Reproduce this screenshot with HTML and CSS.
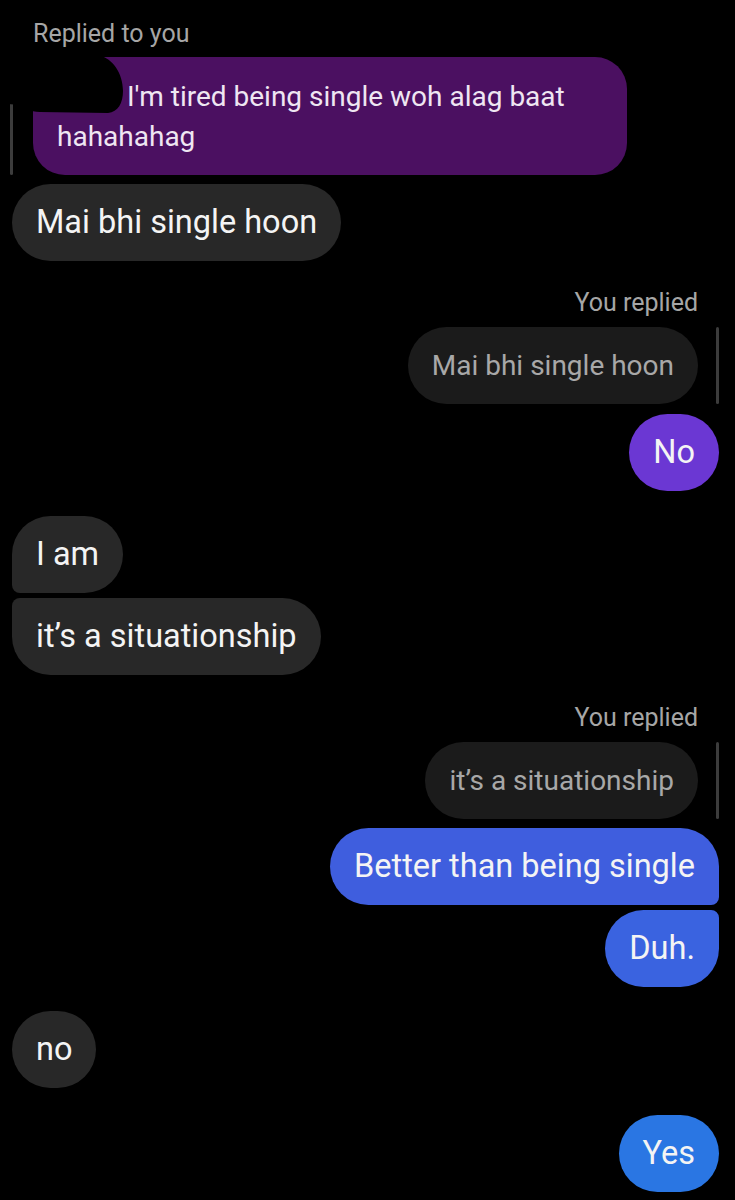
FILE: index.html
```html
<!DOCTYPE html>
<html lang="en">
<head>
  <meta charset="UTF-8" />
  <meta name="viewport" content="width=device-width, initial-scale=1.0" />
  <title>Chat</title>
  <link rel="stylesheet" href="styles.css">
</head>
<body>
<div class="chat">

  <div class="label label-left">Replied to you</div>
  <div class="quote quote-left">
    <div class="quote-bar"></div>
    <div class="bubble purple"><span class="spacer"></span>I'm tired being single woh alag baat hahahahag</div>
    <svg class="redacted" viewBox="0 0 118 62" width="118" height="62">
      <path d="M0 1 H92 C104 3 115 18 115 36 C115 48 110 57 100 58 L32 57 C22 57 16 52 12 50 L0 49 Z" fill="#000"/>
    </svg>
  </div>
  <div class="bubble in mt-9">Mai bhi single hoon</div>

  <div class="label label-right mt-29">You replied</div>
  <div class="quote quote-right">
    <div class="bubble faded">Mai bhi single hoon</div>
    <div class="quote-bar"></div>
  </div>
  <div class="bubble out violet mt-10">No</div>

  <div class="bubble in first mt-25">I am</div>
  <div class="bubble in last mt-5">it’s a situationship</div>

  <div class="label label-right mt-30">You replied</div>
  <div class="quote quote-right">
    <div class="bubble faded">it’s a situationship</div>
    <div class="quote-bar"></div>
  </div>
  <div class="bubble out blue first mt-9">Better than being single</div>
  <div class="bubble out blue2 last mt-5">Duh.</div>

  <div class="bubble in mt-24">no</div>

  <div class="bubble out sky mt-27">Yes</div>

</div>
</body>
</html>
```

FILE: styles.css
```css
body {
  margin: 0;
  background: #000;
  font-family: Roboto, "Noto Sans", sans-serif;
  color: #f2f2f2;
}
.chat {
  display: flex;
  flex-direction: column;
  align-items: flex-start;
  padding: 21px 16px 0 12px;
}
.label {
  font-size: 25px;
  line-height: 26px;
  color: #a6a6a6;
}
.label-left {
  margin-left: 21px;
}
.label-right {
  align-self: flex-end;
  margin-right: 21px;
}
.bubble {
  font-size: 32.5px;
  line-height: 37px;
  padding: 20px 24px;
  border-radius: 39px;
  background: #282828;
  color: #f4f4f4;
  white-space: nowrap;
}
.in.first { border-bottom-left-radius: 8px; }
.in.last { border-top-left-radius: 8px; }
.out { align-self: flex-end; }
.out.first { border-bottom-right-radius: 8px; }
.out.last { border-top-right-radius: 8px; }

.violet { background: #6b37d3; }
.blue { background: #3f5ede; }
.blue2 { background: #3a63e0; }
.sky { background: #2a76e3; }

.quote {
  display: flex;
  align-items: stretch;
  margin-top: 10px;
  position: relative;
}
.quote-left {
  margin-left: -2px;
  gap: 20px;
}
.quote-right {
  align-self: flex-end;
  gap: 18px;
  margin-top: 11px;
}
.quote-bar {
  width: 3px;
  background: #3c3c3c;
  border-radius: 2px;
}
.faded {
  background: #1b1b1b;
  color: #a8a8a8;
  font-size: 28px;
}
.purple {
  background: #4b1061;
  color: #efe6f2;
  font-size: 28px;
  line-height: 40px;
  padding: 20px 24px 18px;
  border-radius: 32px;
  width: 546px;
  white-space: normal;
}
.spacer {
  display: inline-block;
  width: 70px;
}
.redacted {
  position: absolute;
  left: -2px;
  top: -2px;
}

.mt-5 { margin-top: 5px; }
.mt-9 { margin-top: 9px; }
.mt-10 { margin-top: 10px; }
.mt-24 { margin-top: 24px; }
.mt-25 { margin-top: 25px; }
.mt-27 { margin-top: 27px; }
.mt-29 { margin-top: 29px; }
.mt-30 { margin-top: 30px; }
```
